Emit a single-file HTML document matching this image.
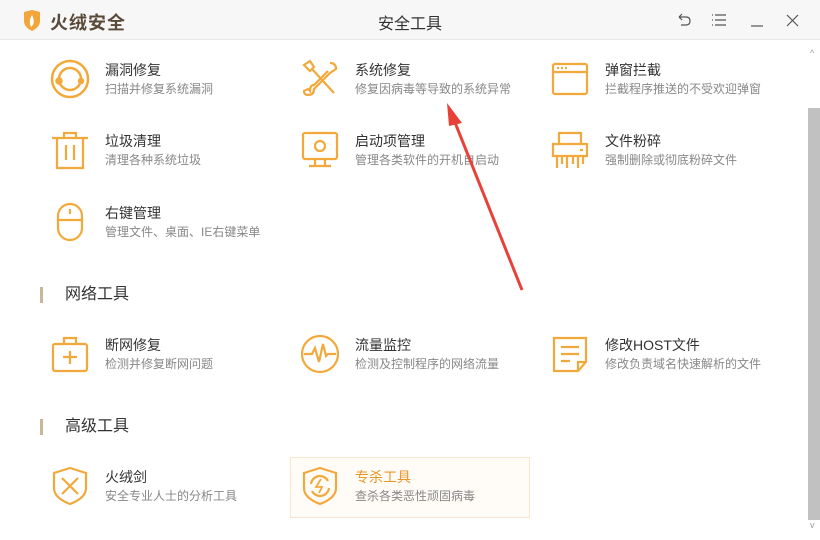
<!DOCTYPE html><html><head><meta charset="utf-8"><style>
*{margin:0;padding:0;box-sizing:border-box}
body{width:820px;height:540px;background:#fff;font-family:"Liberation Sans","Noto Sans CJK SC",sans-serif;position:relative;overflow:hidden}
.hd{position:absolute;left:0;top:0;width:820px;height:40px;background:#f7f7f7;border-bottom:1px solid #e8e8e8}
.logo{position:absolute;left:50px;top:9px;font-size:18px;font-weight:bold;color:#5a4a3a;letter-spacing:1px}
.ttl{position:absolute;left:0;width:820px;top:10px;text-align:center;font-size:16px;color:#333}
.it{position:absolute;width:240px;height:60px}
.it svg{position:absolute;left:0;top:0}
.it .t{position:absolute;left:55px;top:1px;font-size:14px;color:#333;white-space:nowrap}
.it .d{position:absolute;left:55px;top:21px;font-size:12px;color:#888;white-space:nowrap}
.sec{position:absolute;left:40px;font-size:16px;color:#333;padding-left:22px;border-left:3px solid #c9b79c;line-height:16px}
.sb{position:absolute;left:808px;top:108px;width:12px;height:412px;background:#c1c1c1}
</style></head><body>
<div class="hd">
<svg style="position:absolute;left:23px;top:10px" width="18" height="21" viewBox="0 0 18 21"><path d="M1 2 L9 0 L17 2 L17 11 Q17 17 9 21 Q1 17 1 11Z" fill="#f2a53a"/><path d="M9 5 Q5 11 8 17 Q13 13 9 5Z" fill="#fff"/></svg>
<div class="logo">火绒安全</div>
<div class="ttl">安全工具</div>
<svg style="position:absolute;left:675px;top:12px" width="130" height="16" viewBox="0 0 130 16" fill="none" stroke="#555" stroke-width="1.2"><path d="M4 5 H11 Q15 5 15 9 Q15 13 11 13 H6 M4 5 L7 2 M4 5 L7 8"/><path d="M40 3 H51 M40 8 H51 M40 13 H51 M37 3h1M37 8h1M37 13h1"/><path d="M76 14 H88"/><path d="M112 3 L123 14 M123 3 L112 14"/></svg>
</div>
<div class="sb"></div>
<div style="position:absolute;left:810px;top:48px;font-size:9px;color:#999">^</div>
<div style="position:absolute;left:810px;top:520px;font-size:9px;color:#999">v</div>

<div class="it" style="left:50px;top:59px"><svg width="40" height="40" fill="none" stroke="#f2a93b" stroke-width="2.5"><circle cx="20" cy="20" r="18"/><circle cx="20" cy="20" r="11"/><circle cx="9" cy="22" r="2.5" fill="#f2a93b"/><circle cx="31" cy="22" r="2" fill="#f2a93b"/></svg><div class="t">漏洞修复</div><div class="d">扫描并修复系统漏洞</div></div>
<div class="it" style="left:300px;top:59px"><svg width="40" height="40" fill="none" stroke="#f2a93b" stroke-width="2.2"><path d="M4 6 L10 2 L14 8 L10 12Z M12 10 L34 34 M30 4 Q36 4 36 10 L30 14 L14 30 Q14 36 8 36 Q4 36 4 32 L8 30 L10 32 Q10 26 14 26 L28 12"/></svg><div class="t">系统修复</div><div class="d">修复因病毒等导致的系统异常</div></div>
<div class="it" style="left:550px;top:59px"><svg width="40" height="40" fill="none" stroke="#f2a93b" stroke-width="2.2"><rect x="3" y="5" width="34" height="30" rx="2"/><path d="M3 13 H37 M7 9h2M11 9h2M15 9h2"/></svg><div class="t">弹窗拦截</div><div class="d">拦截程序推送的不受欢迎弹窗</div></div>

<div class="it" style="left:50px;top:130px"><svg width="40" height="40" fill="none" stroke="#f2a93b" stroke-width="2.2"><path d="M2 8 H38 M14 8 V3 H26 V8 M7 8 V38 H33 V8 M16 15 V30 M24 15 V30"/></svg><div class="t">垃圾清理</div><div class="d">清理各种系统垃圾</div></div>
<div class="it" style="left:300px;top:130px"><svg width="40" height="40" fill="none" stroke="#f2a93b" stroke-width="2.2"><rect x="3" y="3" width="34" height="26" rx="2"/><circle cx="20" cy="16" r="5"/><path d="M15 29 V35 M25 29 V35 M9 36 H31"/></svg><div class="t">启动项管理</div><div class="d">管理各类软件的开机自启动</div></div>
<div class="it" style="left:550px;top:130px"><svg width="40" height="40" fill="none" stroke="#f2a93b" stroke-width="2.2"><path d="M9 14 V3 H31 V14 M3 14 H37 V26 H3Z M7 26 V38 M12 26 V34 M17 26 V38 M23 26 V34 M28 26 V38 M33 26 V34 M30 20h3"/></svg><div class="t">文件粉碎</div><div class="d">强制删除或彻底粉碎文件</div></div>

<div class="it" style="left:50px;top:202px"><svg width="40" height="40" fill="none" stroke="#f2a93b" stroke-width="2.2"><rect x="8" y="2" width="24" height="36" rx="12"/><path d="M20 7 V12 M8 18 H32"/></svg><div class="t">右键管理</div><div class="d">管理文件、桌面、IE右键菜单</div></div>

<div class="sec" style="top:287px">网络工具</div>
<div class="it" style="left:50px;top:334px"><svg width="40" height="40" fill="none" stroke="#f2a93b" stroke-width="2.2"><rect x="3" y="10" width="34" height="27" rx="2"/><path d="M14 10 V4 H26 V10 M20 17 V30 M13 23 H27"/></svg><div class="t">断网修复</div><div class="d">检测并修复断网问题</div></div>
<div class="it" style="left:300px;top:334px"><svg width="40" height="40" fill="none" stroke="#f2a93b" stroke-width="2.2"><circle cx="20" cy="20" r="18"/><path d="M4 20 H12 L15 14 L19 28 L23 10 L26 22 L28 20 H36"/></svg><div class="t">流量监控</div><div class="d">检测及控制程序的网络流量</div></div>
<div class="it" style="left:550px;top:334px"><svg width="40" height="40" fill="none" stroke="#f2a93b" stroke-width="2.2"><path d="M4 4 H36 V28 L28 37 H4Z M28 37 V28 H36 M11 13 H29 M11 20 H29 M11 27 H20"/></svg><div class="t">修改HOST文件</div><div class="d">修改负责域名快速解析的文件</div></div>

<div class="sec" style="top:419px">高级工具</div>
<div style="position:absolute;left:290px;top:457px;width:240px;height:61px;background:#fffcf8;border:1px solid #f5e6cc"></div>
<div class="it" style="left:50px;top:466px"><svg width="40" height="40" fill="none" stroke="#f2a93b" stroke-width="2.2"><path d="M4 7 L20 2 L36 7 L36 22 Q36 32 20 38 Q4 32 4 22Z M12 12 L28 28 M28 12 L12 28"/></svg><div class="t">火绒剑</div><div class="d">安全专业人士的分析工具</div></div>
<div class="it" style="left:300px;top:466px"><svg width="40" height="40" fill="none" stroke="#f2a93b" stroke-width="2.2"><path d="M4 7 L20 2 L36 7 L36 22 Q36 32 20 38 Q4 32 4 22Z M11 18 A9 9 0 0 1 28 15 M29 22 A9 9 0 0 1 12 25"/><path d="M21 13 L16 21 H22 L19 27" stroke-width="1.8"/></svg><div class="t" style="color:#e8962a">专杀工具</div><div class="d">查杀各类恶性顽固病毒</div></div>

<svg style="position:absolute;left:0;top:0" width="820" height="540"><line x1="522" y1="290" x2="454" y2="120" stroke="#e8413a" stroke-width="3"/><path d="M447 103 L462 123 L449 126Z" fill="#e8413a"/></svg>
</body></html>
